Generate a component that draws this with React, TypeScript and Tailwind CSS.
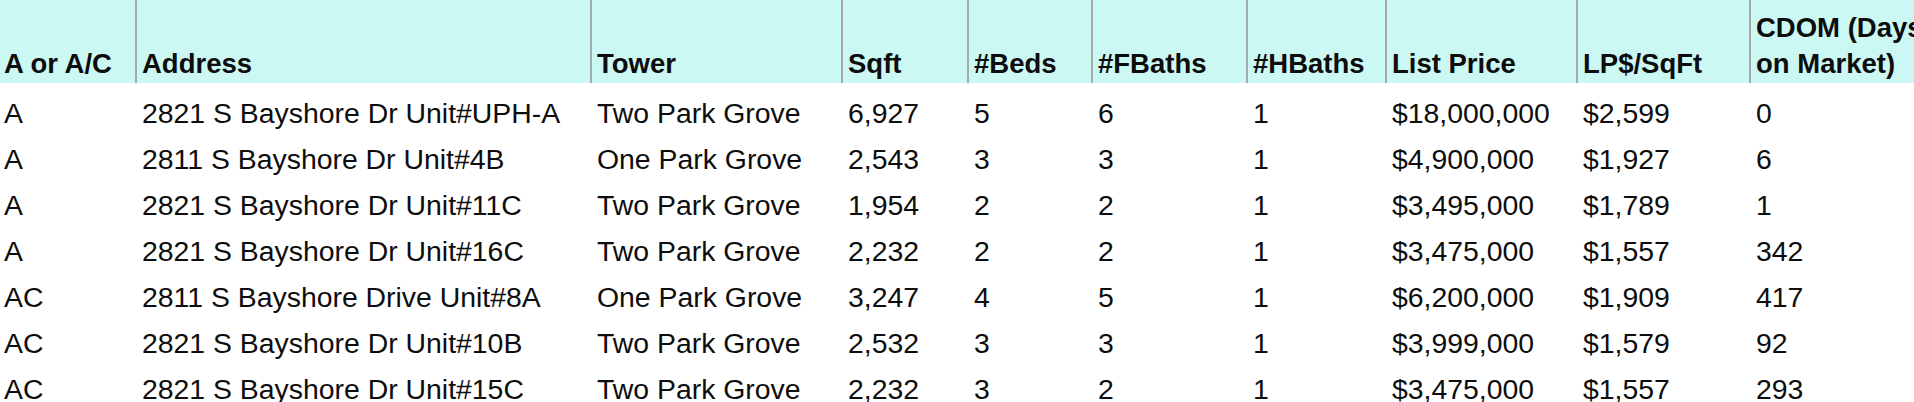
import React from "react";

const cols = [
  "w-[135px]",
  "w-[455px]",
  "w-[251px]",
  "w-[126px]",
  "w-[124px]",
  "w-[155px]",
  "w-[139px]",
  "w-[191px]",
  "w-[173px]",
  "w-[200px]",
];

const headers: React.ReactNode[] = [
  "A or A/C",
  "Address",
  "Tower",
  "Sqft",
  "#Beds",
  "#FBaths",
  "#HBaths",
  "List Price",
  "LP$/SqFt",
  "CDOM (Days on Market)",
];

const rows: string[][] = [
  ["A", "2821 S Bayshore Dr Unit#UPH-A", "Two Park Grove", "6,927", "5", "6", "1", "$18,000,000", "$2,599", "0"],
  ["A", "2811 S Bayshore Dr Unit#4B", "One Park Grove", "2,543", "3", "3", "1", "$4,900,000", "$1,927", "6"],
  ["A", "2821 S Bayshore Dr Unit#11C", "Two Park Grove", "1,954", "2", "2", "1", "$3,495,000", "$1,789", "1"],
  ["A", "2821 S Bayshore Dr Unit#16C", "Two Park Grove", "2,232", "2", "2", "1", "$3,475,000", "$1,557", "342"],
  ["AC", "2811 S Bayshore Drive Unit#8A", "One Park Grove", "3,247", "4", "5", "1", "$6,200,000", "$1,909", "417"],
  ["AC", "2821 S Bayshore Dr Unit#10B", "Two Park Grove", "2,532", "3", "3", "1", "$3,999,000", "$1,579", "92"],
  ["AC", "2821 S Bayshore Dr Unit#15C", "Two Park Grove", "2,232", "3", "2", "1", "$3,475,000", "$1,557", "293"],
];

export default function App() {
  return (
    <div
      className="w-[1914px] h-[402px] overflow-hidden bg-white text-[#0d0d0d]"
      style={{ fontFamily: '"Liberation Sans", Arial, Helvetica, sans-serif' }}
    >
      <table className="table-fixed border-separate border-spacing-0 w-[1949px]">
        <colgroup>
          {cols.map((c, i) => (
            <col key={i} className={c} />
          ))}
        </colgroup>
        <thead>
          <tr className="h-[83px] bg-[#ccf8f4]">
            {headers.map((h, i) => (
              <th
                key={i}
                className={
                  "align-bottom text-left font-bold text-[27.5px] leading-[36px] pb-[1px] whitespace-normal " +
                  (i === 0 ? "pl-[4px]" : "border-l-2 border-[#a9a9a9] pl-[5px]")
                }
              >
                {h}
              </th>
            ))}
          </tr>
        </thead>
        <tbody>
          {rows.map((r, ri) => (
            <tr key={ri} className="h-[46px]">
              {r.map((c, ci) => (
                <td
                  key={ci}
                  className={
                    "align-top text-left text-[28.4px] leading-[32px] pt-[14px] pb-0 whitespace-nowrap " +
                    (ci === 0 ? "pl-[4px]" : "border-l-2 border-transparent pl-[5px]")
                  }
                >
                  {c}
                </td>
              ))}
            </tr>
          ))}
        </tbody>
      </table>
    </div>
  );
}
